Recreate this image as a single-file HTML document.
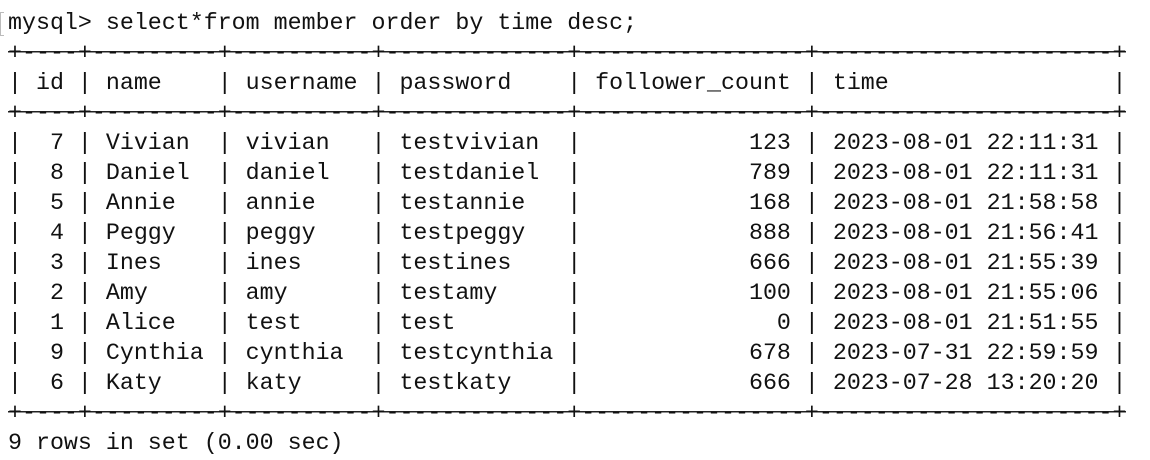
<!DOCTYPE html>
<html><head><meta charset="utf-8"><style>
html,body{margin:0;padding:0;background:#fff;width:1150px;height:460px;overflow:hidden;}
pre{position:absolute;left:8px;top:8px;margin:0;font-family:"Liberation Mono",monospace;font-size:23.3px;line-height:30px;color:#111;}
.b{background:linear-gradient(#222,#222) no-repeat 0 44%/100% 1.5px;}
.br{position:absolute;left:0;top:12px;width:3px;height:22px;border:1px solid #bbb;border-right:none;}
</style></head><body>
<div class="br"></div>
<pre>mysql&gt; select*from member order by time desc;
<span class="b">+----+---------+----------+-------------+----------------+---------------------+</span>
| id | name    | username | password    | follower_count | time                |
<span class="b">+----+---------+----------+-------------+----------------+---------------------+</span>
|  7 | Vivian  | vivian   | testvivian  |            123 | 2023-08-01 22:11:31 |
|  8 | Daniel  | daniel   | testdaniel  |            789 | 2023-08-01 22:11:31 |
|  5 | Annie   | annie    | testannie   |            168 | 2023-08-01 21:58:58 |
|  4 | Peggy   | peggy    | testpeggy   |            888 | 2023-08-01 21:56:41 |
|  3 | Ines    | ines     | testines    |            666 | 2023-08-01 21:55:39 |
|  2 | Amy     | amy      | testamy     |            100 | 2023-08-01 21:55:06 |
|  1 | Alice   | test     | test        |              0 | 2023-08-01 21:51:55 |
|  9 | Cynthia | cynthia  | testcynthia |            678 | 2023-07-31 22:59:59 |
|  6 | Katy    | katy     | testkaty    |            666 | 2023-07-28 13:20:20 |
<span class="b">+----+---------+----------+-------------+----------------+---------------------+</span>
9 rows in set (0.00 sec)</pre>
</body></html>
